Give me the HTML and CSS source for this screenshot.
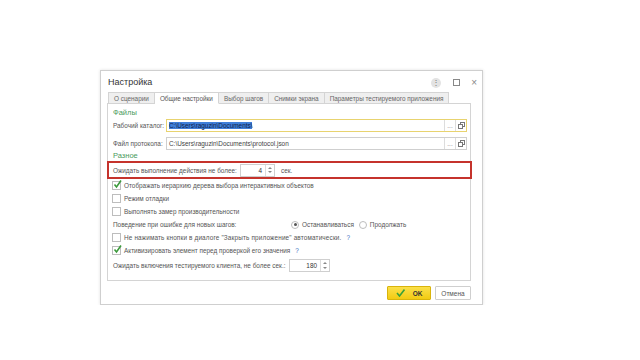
FILE: index.html
```html
<!DOCTYPE html>
<html>
<head>
    <title>Настройка</title>
    <link rel="stylesheet" href="styles.css">
</head>
<body>
    <div class="page">
        <div class="window">
            <div class="titlebar">
                <span class="title">Настройка</span>
                <div class="win-controls">
                    <span class="ctl-more">&#8942;</span>
                    <span class="ctl-max"></span>
                    <span class="ctl-close">&#215;</span>
                </div>
            </div>

            <div class="tabs">
                <div class="tab">О сценарии</div>
                <div class="tab active">Общие настройки</div>
                <div class="tab">Выбор шагов</div>
                <div class="tab">Снимки экрана</div>
                <div class="tab">Параметры тестируемого приложения</div>
            </div>

            <div class="panel">
                <div class="group-title">Файлы</div>
                <div class="field-row">
                    <label class="field-label">Рабочий каталог:</label>
                    <div class="input focused">
                        <span class="value"><span class="selected">C:\Users\raguzin\Documents\</span></span>
                        <span class="input-btn">...</span>
                        <span class="input-btn">
                            <svg width="7" height="7" viewBox="0 0 7 7"><rect x="2.5" y="0.5" width="4" height="4" fill="none" stroke="#777"/><rect x="0.5" y="2.5" width="4" height="4" fill="#fff" stroke="#777"/></svg>
                        </span>
                    </div>
                </div>
                <div class="field-row second">
                    <label class="field-label">Файл протокола:</label>
                    <div class="input">
                        <span class="value">C:\Users\raguzin\Documents\protocol.json</span>
                        <span class="input-btn">...</span>
                        <span class="input-btn">
                            <svg width="7" height="7" viewBox="0 0 7 7"><rect x="2.5" y="0.5" width="4" height="4" fill="none" stroke="#777"/><rect x="0.5" y="2.5" width="4" height="4" fill="#fff" stroke="#777"/></svg>
                        </span>
                    </div>
                </div>

                <div class="group-title second">Разное</div>
                <div class="highlight">
                    <span class="wait-first">Ожидать выполнение действия не более:</span>
                    <div class="spin small">
                        <span class="spin-value">4</span>
                        <span class="spin-arrows"><i class="up"></i><i class="down"></i></span>
                    </div>
                    <span class="unit">сек.</span>
                </div>

                <div class="check-row">
                    <span class="checkbox checked"><svg width="9" height="9" viewBox="0 0 9 9"><path d="M1.5 4.5 L3.5 7 L8 0.5" fill="none" stroke="#3c9a3c" stroke-width="1.6"/></svg></span>
                    <span>Отображать иерархию дерева выбора интерактивных объектов</span>
                </div>
                <div class="check-row">
                    <span class="checkbox"></span>
                    <span>Режим отладки</span>
                </div>
                <div class="check-row">
                    <span class="checkbox"></span>
                    <span>Выполнять замер производительности</span>
                </div>
                <div class="check-row">
                    <span class="radio-label">Поведение при ошибке для новых шагов:</span>
                    <span class="radio on"></span>
                    <span>Останавливаться</span>
                    <span class="radio second"></span>
                    <span>Продолжать</span>
                </div>
                <div class="check-row">
                    <span class="checkbox"></span>
                    <span class="wide-text">Не нажимать кнопки в диалоге "Закрыть приложение" автоматически.</span>
                    <span class="help">?</span>
                </div>
                <div class="check-row">
                    <span class="checkbox checked"><svg width="9" height="9" viewBox="0 0 9 9"><path d="M1.5 4.5 L3.5 7 L8 0.5" fill="none" stroke="#3c9a3c" stroke-width="1.6"/></svg></span>
                    <span>Активизировать элемент перед проверкой его значения</span>
                    <span class="help">?</span>
                </div>
                <div class="check-row last">
                    <span class="wait-label">Ожидать включения тестируемого клиента, не более сек.:</span>
                    <div class="spin wide">
                        <span class="spin-value">180</span>
                        <span class="spin-arrows"><i class="up"></i><i class="down"></i></span>
                    </div>
                </div>
            </div>

            <div class="footer">
                <button class="btn-ok">
                    <svg width="9" height="8" viewBox="0 0 9 8"><path d="M1 4 L3.5 7 L8.5 0.5" fill="none" stroke="#3aa13a" stroke-width="1.6"/></svg>
                    OK
                </button>
                <button class="btn-cancel">Отмена</button>
            </div>
        </div>
    </div>
</body>
</html>
```

FILE: styles.css
```css
body {
    margin: 0;
    background-color: #fff;
    font-family: "Liberation Sans", Arial, sans-serif;
    font-size: 6.4px;
    color: #555;
}

.page {
    padding: 70px 0 0 100px;
}

.window {
    width: 383px;
    height: 235px;
    border: 1px solid #cfcfcf;
    box-shadow: 0 0 3px rgba(0, 0, 0, 0.12);
    background-color: #fff;
    padding: 0 11px 0 6px;
    box-sizing: border-box;
    display: flex;
    flex-direction: column;
}

.titlebar {
    height: 21px;
    display: flex;
    align-items: center;
    padding-left: 1px;
}

.title {
    font-size: 9px;
    color: #333;
    flex: 1;
    padding-top: 1px;
}

.win-controls {
    display: flex;
    align-items: center;
    margin-right: -6px;
    padding-top: 2px;
}

.ctl-more {
    width: 10px;
    height: 10px;
    border-radius: 50%;
    background-color: #e3e3e3;
    color: #777;
    font-size: 8px;
    line-height: 10px;
    text-align: center;
}

.ctl-max {
    width: 5px;
    height: 5px;
    border: 1px solid #888;
    margin-left: 12px;
}

.ctl-close {
    font-size: 10px;
    color: #888;
    margin-left: 11px;
}

.tabs {
    display: flex;
    height: 12px;
    padding-left: 1px;
    position: relative;
    z-index: 1;
    white-space: nowrap;
}

.tab {
    padding: 0 5px;
    line-height: 11px;
    border: 1px solid #d4d4d4;
    border-left: none;
    background-color: #efefef;
    color: #666;
}

.tab:first-child {
    border-left: 1px solid #d4d4d4;
}

.tab.active {
    background-color: #fff;
    border-bottom-color: #fff;
    color: #555;
}

.panel {
    height: 178px;
    border: 1px solid #d4d4d4;
    margin-top: -1px;
    padding: 1px 3px 0 5px;
    box-sizing: border-box;
    white-space: nowrap;
}

.group-title {
    color: #4a9a5c;
    font-size: 7.5px;
    height: 14px;
    line-height: 15px;
}

.group-title.second {
    height: 11px;
    line-height: 11px;
}

.field-row {
    display: flex;
    align-items: center;
    height: 13px;
}

.field-row.second {
    margin-top: 5px;
}

.field-label {
    width: 53px;
    flex-shrink: 0;
}

.input {
    flex: 1;
    height: 13px;
    border: 1px solid #cfcfcf;
    box-sizing: border-box;
    display: flex;
    align-items: center;
    background-color: #fff;
    color: #444;
}

.input.focused {
    border-color: #e8d36f;
}

.input .value {
    flex: 1;
    padding-left: 2px;
}

.selected {
    background-color: #3f7fd9;
    color: #12224a;
}

.input-btn {
    width: 10px;
    height: 100%;
    border-left: 1px solid #ddd;
    display: flex;
    align-items: center;
    justify-content: center;
    color: #888;
}

.highlight {
    display: flex;
    align-items: center;
    height: 18px;
    margin: 0 -5px 0 -6px;
    padding-left: 4px;
    border: 2px solid #c5332c;
    box-sizing: border-box;
}

.wait-first {
    width: 127px;
}

.spin {
    height: 13px;
    border: 1px solid #cfcfcf;
    box-sizing: border-box;
    display: flex;
    background-color: #fff;
    color: #333;
}

.spin.small {
    width: 35px;
}

.spin.wide {
    width: 41px;
}

.spin-value {
    flex: 1;
    text-align: right;
    padding-right: 3px;
    line-height: 11px;
}

.spin-arrows {
    width: 8px;
    border-left: 1px solid #ddd;
    display: flex;
    flex-direction: column;
    align-items: center;
    justify-content: space-around;
    padding: 1px 0;
}

.spin-arrows i {
    width: 0;
    height: 0;
    border-left: 2px solid transparent;
    border-right: 2px solid transparent;
}

.spin-arrows .up {
    border-bottom: 2px solid #888;
}

.spin-arrows .down {
    border-top: 2px solid #888;
}

.unit {
    margin-left: 6px;
}

.check-row {
    display: flex;
    align-items: center;
    height: 13px;
}

.check-row.last {
    height: 15px;
    margin-top: 1px;
}

.checkbox {
    width: 9px;
    height: 9px;
    border: 1px solid #bdbdbd;
    box-sizing: border-box;
    margin: 0 3px 0 -1px;
    position: relative;
    background-color: #fff;
}

.checkbox svg {
    position: absolute;
    left: 0;
    top: -2px;
}

.radio-label {
    width: 178px;
}

.radio {
    width: 8px;
    height: 8px;
    border: 1px solid #bdbdbd;
    border-radius: 50%;
    box-sizing: border-box;
    margin-right: 3px;
    display: flex;
    align-items: center;
    justify-content: center;
}

.radio.on::after {
    content: "";
    width: 3px;
    height: 3px;
    border-radius: 50%;
    background-color: #555;
}

.radio.second {
    margin-left: 5px;
}

.wide-text {
    letter-spacing: 0.15px;
}

.help {
    color: #3d6fc2;
    margin-left: 5px;
}

.wait-label {
    width: 176px;
}

.footer {
    display: flex;
    justify-content: flex-end;
    gap: 4px;
    padding-top: 5px;
}

.footer button {
    height: 14px;
    font-family: "Liberation Sans", Arial, sans-serif;
    font-size: 6.5px;
    border-radius: 1px;
    padding: 0;
    display: flex;
    align-items: center;
    justify-content: center;
}

.btn-ok {
    width: 44px;
    background: linear-gradient(#fbe04a, #f2cb12);
    border: 1px solid #d9b40c;
    color: #333;
    font-weight: bold;
    gap: 8px;
}

.btn-cancel {
    width: 36px;
    background-color: #fff;
    border: 1px solid #cfcfcf;
    color: #555;
}
```
